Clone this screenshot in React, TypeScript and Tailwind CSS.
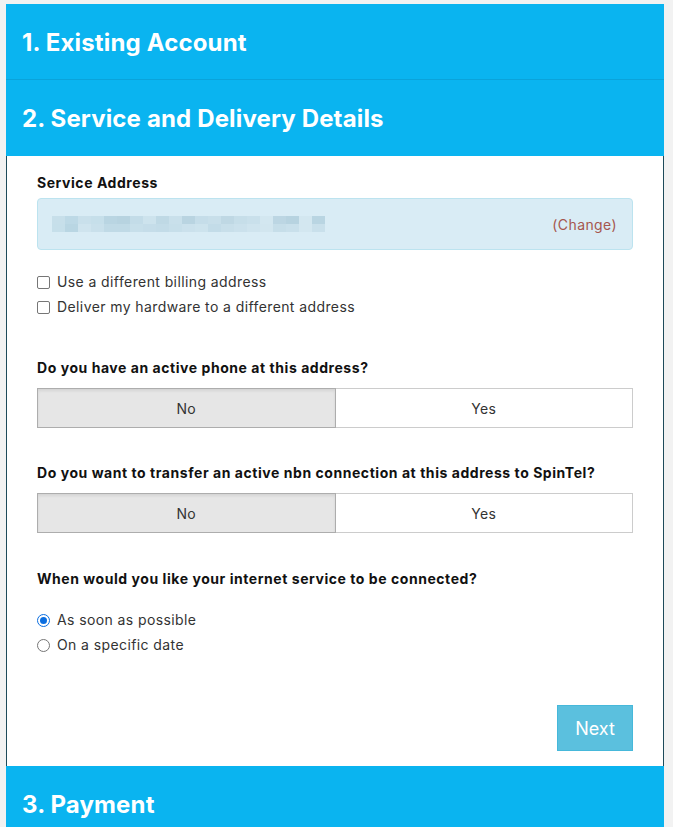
import React from "react";

const font = { fontFamily: "Inter, 'Open Sans', sans-serif" };

function Header({ title, border = true }: { title: string; border?: boolean }) {
  return (
    <div className={`bg-[#0ab4f0] h-[76px] flex items-center px-[16px] ${border ? "border-b border-[#0aa3da]" : ""}`}>
      <h2 className="text-white text-[24px] font-bold tracking-[0.15px] pt-[2px]">{title}</h2>
    </div>
  );
}

function Toggle() {
  return (
    <div className="flex h-[40px] mt-[10px]">
      <div className="flex-1 flex items-center justify-center bg-[#e6e6e6] border border-[#adadad] shadow-[inset_0_2px_3px_rgba(0,0,0,0.08)] text-[14px] text-[#333] tracking-[0.3px]">No</div>
      <div className="flex-1 flex items-center justify-center bg-white border border-l-0 border-[#cccccc] text-[14px] text-[#333] tracking-[0.3px]">Yes</div>
    </div>
  );
}

const q = "text-[14px] font-bold text-[#111] leading-[20px] tracking-[0.55px]";
const lbl = "flex items-center gap-[7px] text-[14px] text-[#333] leading-[18px] tracking-[0.4px]";

export default function App() {
  return (
    <div className="min-h-[827px] bg-[#f2f2f2] pt-[4px] px-[6px]" style={font}>
      <div className="w-[658px]">
        <Header title="1. Existing Account" />
        <Header title="2. Service and Delivery Details" border={false} />
        <div className="bg-white border-x border-[#1d4a5a] px-[30px] pt-[17px] pb-[15px]">
          <div className={q}>Service Address</div>
          <div className="mt-[5px] h-[52px] bg-[#d9ecf5] border border-[#bce3ef] rounded-[4px] flex items-center justify-between pl-[14px] pr-[15px]">
            <div className="flex flex-col">
              <div className="flex h-[8px]">
                {["#c7dfea","#bdd9e6","#c9e0eb","#c6dfea","#b9d5e2","#b7d3e0","#c3dce8","#cde3ed","#bfd9e5","#c9e0eb","#b9d4e1","#c5dde9","#c8dfea","#bfd8e4","#c6dee9","#c9e0eb","#d3e7f0","#bcd6e3","#b7d3e0","#d3e7f0","#b9d5e2"].map((c, i) => (
                  <div key={i} className="w-[13px] h-[8px]" style={{ background: c }} />
                ))}
              </div>
              <div className="flex h-[8px]">
                {["#c6dfea","#b9d6e3","#cfe4ee","#c9e0eb","#c0dae6","#c0dae6","#c7dfea","#c5dde9","#c3dce8","#c7dfea","#cbe1ec","#cde3ed","#c3dce8","#c8dfea","#cbe1ec","#cfe4ee","#d2e6ef","#c6dee9","#c9e0eb","#d3e7f0","#c9e0eb"].map((c, i) => (
                  <div key={i} className="w-[13px] h-[8px]" style={{ background: c }} />
                ))}
              </div>
            </div>
            <span className="text-[14px] text-[#a5564e] tracking-[0.4px]">(Change)</span>
          </div>

          <div className="mt-[23px] flex flex-col gap-[7px]">
            <label className={lbl}>
              <span className="w-[13px] h-[13px] border border-[#767676] rounded-[2px] bg-white" />
              Use a different billing address
            </label>
            <label className={lbl}>
              <span className="w-[13px] h-[13px] border border-[#767676] rounded-[2px] bg-white" />
              Deliver my hardware to a different address
            </label>
          </div>

          <div className={`mt-[42px] ${q}`}>Do you have an active phone at this address?</div>
          <Toggle />

          <div className={`mt-[35px] ${q}`}>Do you want to transfer an active nbn connection at this address to SpinTel?</div>
          <Toggle />

          <div className={`mt-[36px] ${q}`}>When would you like your internet service to be connected?</div>

          <div className="mt-[22px] flex flex-col gap-[7px]">
            <label className={lbl}>
              <span className="w-[13px] h-[13px] rounded-full border border-[#0b6ee0] flex items-center justify-center bg-white">
                <span className="w-[7px] h-[7px] rounded-full bg-[#0b6ee0]" />
              </span>
              As soon as possible
            </label>
            <label className={lbl}>
              <span className="w-[13px] h-[13px] rounded-full border border-[#767676] bg-white" />
              On a specific date
            </label>
          </div>

          <div className="mt-[51px] flex justify-end">
            <button className="w-[76px] h-[46px] bg-[#5bc0de] border border-[#46b8da] text-white text-[18px]">Next</button>
          </div>
        </div>
        <Header title="3. Payment" border={false} />
      </div>
    </div>
  );
}
